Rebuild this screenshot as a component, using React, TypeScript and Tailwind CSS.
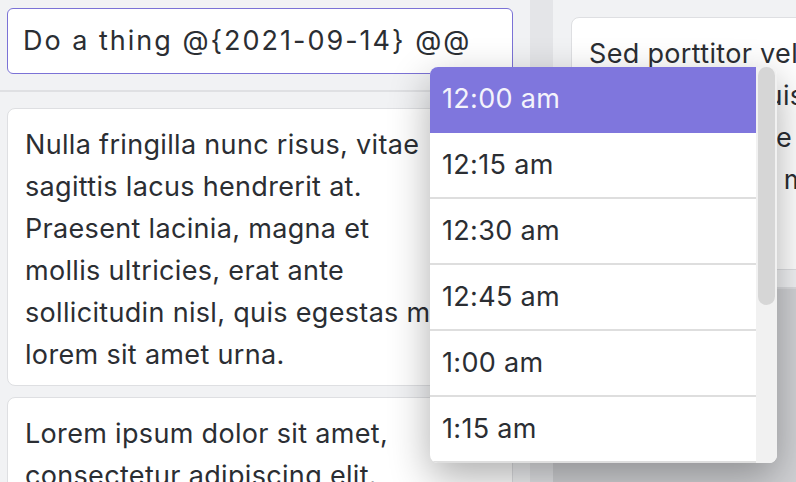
const times = ["12:00 am", "12:15 am", "12:30 am", "12:45 am", "1:00 am", "1:15 am"];

function Card({ lines, className = "" }: { lines: string[]; className?: string }) {
  return (
    <div
      className={`rounded-lg border border-[#dedfe2] bg-white px-[17px] pt-[15px] pb-[9px] leading-[42px] whitespace-nowrap ${className}`}
    >
      {lines.map((l) => (
        <div key={l}>{l}</div>
      ))}
    </div>
  );
}

export default function App() {
  return (
    <div
      className="relative flex h-[482px] w-[796px] overflow-hidden bg-[#f1f2f4] text-[27px] tracking-[0.012em] text-[#2b2e33]"
      style={{ fontFamily: "Inter, 'Noto Sans', sans-serif" }}
    >
      {/* left column */}
      <div className="flex w-[530px] shrink-0 flex-col">
        <div className="border-b-2 border-[#dfe0e3] pt-[8px] pr-[17px] pb-[16px] pl-[7px]">
          <div className="flex h-[66px] items-center rounded-md border-[1.5px] border-[#7b72d6] bg-white px-[15px] tracking-[2px]">
            Do a thing @{"{"}2021-09-14{"}"} @@
          </div>
        </div>
        <div className="flex flex-col gap-[11px] pt-[16px] pr-[17px] pl-[7px]">
          <Card
            lines={[
              "Nulla fringilla nunc risus, vitae",
              "sagittis lacus hendrerit at.",
              "Praesent lacinia, magna et",
              "mollis ultricies, erat ante",
              "sollicitudin nisl, quis egestas mi",
              "lorem sit amet urna.",
            ]}
          />
          <Card lines={["Lorem ipsum dolor sit amet,", "consectetur adipiscing elit."]} />
        </div>
      </div>

      {/* divider */}
      <div className="w-[23px] shrink-0 bg-[#e4e5e8]" />

      {/* right column */}
      <div className="flex flex-1 flex-col">
        <div className="pt-[17px] pb-[17px] pl-[18px]">
          <Card
            className="h-[253px] w-[340px]"
            lines={[
              "Sed porttitor vel",
              "elementum, quis",
              "tincidunt et une",
              "ut mauris arcu m",
              "nisi.",
            ]}
          />
        </div>
        <div className="flex-1 border-t-2 border-[#dcdde0] bg-[#d1d2d5]" />
      </div>

      {/* time dropdown */}
      <div className="absolute top-[67px] left-[430px] flex h-[396px] w-[347px] overflow-hidden rounded-lg bg-white shadow-[0_14px_40px_rgba(0,0,0,0.32)]">
        <div className="flex-1">
          {times.map((t, i) => (
            <div
              key={t}
              className={`flex h-[66px] items-center border-b-2 px-[12px] ${
                i === 0 ? "border-[#7f76dd] bg-[#7f76dd] text-[#f4f3fb]" : "border-[#dedede]"
              }`}
            >
              {t}
            </div>
          ))}
        </div>
        <div className="w-[21px] bg-[#f1f1f1] px-[2px]">
          <div className="h-[238px] rounded-full bg-[#d6d6d6]" />
        </div>
      </div>
    </div>
  );
}
